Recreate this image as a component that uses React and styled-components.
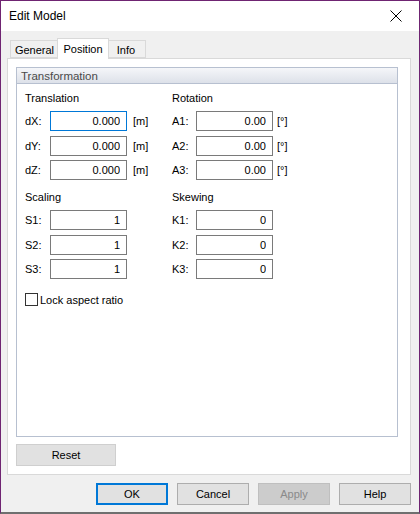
import React, { useState } from 'react';
import styled, { createGlobalStyle } from 'styled-components';

const GlobalStyle = createGlobalStyle`
  html, body {
    margin: 0;
    padding: 0;
    background: #ffffff;
  }
  * {
    box-sizing: border-box;
  }
`;

const Window = styled.div`
  width: 420px;
  height: 514px;
  display: flex;
  flex-direction: column;
  border-top: 1px solid #6f2472;
  border-left: 1px solid #6f2472;
  border-right: 1px solid #6f2472;
  border-bottom: 2px solid #6f6f6f;
  font-family: 'Liberation Sans', Arial, sans-serif;
  font-size: 11px;
  color: #000;
  background: #f0f0f0;
`;

const TitleBar = styled.div`
  height: 30px;
  flex: none;
  display: flex;
  align-items: center;
  justify-content: space-between;
  padding: 0 0 0 8px;
  background: #ffffff;
`;

const Title = styled.span`
  font-size: 12px;
  color: #000;
`;

const CloseButton = styled.button`
  width: 46px;
  height: 30px;
  border: none;
  background: transparent;
  display: flex;
  align-items: center;
  justify-content: center;
  padding: 0;
`;

const Body = styled.div`
  flex: 1;
  display: flex;
  flex-direction: column;
  padding: 7px 8px 0 6px;
`;

const TabStrip = styled.div`
  height: 20px;
  display: flex;
  align-items: flex-end;
  padding-left: 3px;
  position: relative;
  z-index: 1;
`;

const Tab = styled.div`
  width: ${(p) => p.$w}px;
  flex: none;
  height: ${(p) => (p.$active ? '21px' : '18px')};
  margin: ${(p) => (p.$active ? '0 -2px -1px -2px' : '0')};
  display: flex;
  align-items: center;
  justify-content: center;
  background: ${(p) => (p.$active ? '#ffffff' : '#f0f0f0')};
  border: 1px solid #d9d9d9;
  border-bottom: ${(p) => (p.$active ? 'none' : '1px solid #d9d9d9')};
  border-left: ${(p) => (p.$first || p.$active ? '1px solid #d9d9d9' : 'none')};
  position: relative;
  z-index: ${(p) => (p.$active ? 2 : 1)};
  padding-top: ${(p) => (p.$active ? '0' : '2px')};
  font-size: 11px;
`;

const Panel = styled.div`
  height: 417px;
  flex: none;
  background: #ffffff;
  border: 1px solid #d9d9d9;
  padding: 8px 12px 0 8px;
  display: flex;
  flex-direction: column;
`;

const GroupBox = styled.div`
  height: 370px;
  border: 1px solid #b7c0d0;
  display: flex;
  flex-direction: column;
`;

const GroupHeader = styled.div`
  height: 16px;
  flex: none;
  background: linear-gradient(#f5f6f9, #dde1e9);
  border-bottom: 1px solid #b7c0d0;
  padding-left: 4px;
  display: flex;
  align-items: center;
  color: #4a4a4a;
  font-size: 11.5px;
`;

const GroupContent = styled.div`
  padding: 7px 8px 0 8px;
  display: flex;
  flex-direction: column;
`;

const SectionRow = styled.div`
  display: grid;
  grid-template-columns: 147px 160px;
  margin-bottom: ${(p) => p.$mb || 0}px;
`;

const Section = styled.div`
  display: flex;
  flex-direction: column;
`;

const Heading = styled.div`
  height: 14px;
  line-height: 14px;
  margin-bottom: 6px;
`;

const Rows = styled.div`
  display: flex;
  flex-direction: column;
  gap: 4.5px;
`;

const FieldRow = styled.div`
  display: flex;
  align-items: center;
  height: 20px;
`;

const FieldLabel = styled.label`
  width: ${(p) => p.$w || 25}px;
`;

const NumInput = styled.input`
  width: 77px;
  height: 20px;
  border: 1px solid ${(p) => (p.$focused ? '#0078d7' : '#7a7a7a')};
  outline: none;
  text-align: right;
  padding: 0 6px 0 2px;
  font-family: 'Liberation Sans', Arial, sans-serif;
  font-size: 11px;
  color: #000;
  background: #fff;
`;

const Unit = styled.span`
  margin-left: ${(p) => p.$ml || 6}px;
`;

const CheckRow = styled.label`
  display: flex;
  align-items: center;
  gap: 2px;
  margin-top: 14px;
`;

const CheckBox = styled.span`
  width: 13px;
  height: 13px;
  border: 1px solid #333333;
  background: #ffffff;
  display: inline-block;
`;

const ResetButton = styled.button`
  width: 100px;
  height: 22px;
  margin-top: 7px;
  background: #e1e1e1;
  border: 1px solid #cfcfcf;
  font-family: 'Liberation Sans', Arial, sans-serif;
  font-size: 11px;
  color: #000;
  padding: 0;
`;

const Footer = styled.div`
  display: flex;
  justify-content: flex-end;
  gap: 9px;
  padding-top: 8px;
  padding-right: 0;
`;

const DialogButton = styled.button`
  width: 72px;
  height: 22px;
  padding: 0;
  font-family: 'Liberation Sans', Arial, sans-serif;
  font-size: 11px;
  background: ${(p) => (p.disabled ? '#cccccc' : '#e1e1e1')};
  color: ${(p) => (p.disabled ? '#8a8a8a' : '#000')};
  border: ${(p) => (p.$default ? '2px solid #0078d7' : p.disabled ? '1px solid #bfbfbf' : '1px solid #adadad')};
`;

const translation = [
  ['dX:', '0.000'],
  ['dY:', '0.000'],
  ['dZ:', '0.000'],
];
const rotation = [
  ['A1:', '0.00'],
  ['A2:', '0.00'],
  ['A3:', '0.00'],
];
const scaling = [
  ['S1:', '1'],
  ['S2:', '1'],
  ['S3:', '1'],
];
const skewing = [
  ['K1:', '0'],
  ['K2:', '0'],
  ['K3:', '0'],
];

const Fields = ({ items, unit, unitGap, labelWidth, focusFirst }) => (
  <Rows>
    {items.map(([label, value], i) => (
      <FieldRow key={label}>
        <FieldLabel $w={labelWidth}>{label}</FieldLabel>
        <NumInput defaultValue={value} $focused={focusFirst && i === 0} />
        {unit && <Unit $ml={unitGap}>{unit}</Unit>}
      </FieldRow>
    ))}
  </Rows>
);

export default function App() {
  const [tab] = useState('Position');
  const tabs = [
    ['General', 49],
    ['Position', 52],
    ['Info', 39],
  ];

  return (
    <>
      <GlobalStyle />
      <Window>
        <TitleBar>
          <Title>Edit Model</Title>
          <CloseButton aria-label="Close">
            <svg width="12" height="12" viewBox="0 0 12 12">
              <path d="M0.5 0.5 L11.5 11.5 M11.5 0.5 L0.5 11.5" stroke="#000" strokeWidth="1" />
            </svg>
          </CloseButton>
        </TitleBar>
        <Body>
          <TabStrip>
            {tabs.map(([name, w], i) => (
              <Tab key={name} $w={w} $first={i === 0} $active={tab === name}>
                {name}
              </Tab>
            ))}
          </TabStrip>
          <Panel>
            <GroupBox>
              <GroupHeader>Transformation</GroupHeader>
              <GroupContent>
                <SectionRow $mb={10}>
                  <Section>
                    <Heading>Translation</Heading>
                    <Fields items={translation} unit="[m]" unitGap={6} focusFirst />
                  </Section>
                  <Section>
                    <Heading>Rotation</Heading>
                    <Fields items={rotation} unit="[°]" unitGap={4} labelWidth={24} />
                  </Section>
                </SectionRow>
                <SectionRow>
                  <Section>
                    <Heading>Scaling</Heading>
                    <Fields items={scaling} />
                  </Section>
                  <Section>
                    <Heading>Skewing</Heading>
                    <Fields items={skewing} labelWidth={24} />
                  </Section>
                </SectionRow>
                <CheckRow>
                  <CheckBox />
                  Lock aspect ratio
                </CheckRow>
              </GroupContent>
            </GroupBox>
            <ResetButton>Reset</ResetButton>
          </Panel>
          <Footer>
            <DialogButton $default>OK</DialogButton>
            <DialogButton>Cancel</DialogButton>
            <DialogButton disabled>Apply</DialogButton>
            <DialogButton>Help</DialogButton>
          </Footer>
        </Body>
      </Window>
    </>
  );
}
